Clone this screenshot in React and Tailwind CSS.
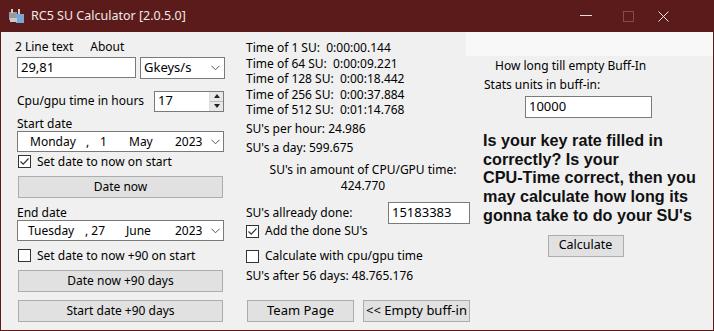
const font = "font-['Noto_Sans','Liberation_Sans',sans-serif]";

function CheckBox({ checked, label }) {
  return (
    <div className="flex items-center h-[15px]">
      <div className="w-[13px] h-[13px] border border-[#333] bg-white flex items-center justify-center">
        {checked && (
          <svg width="11" height="11" viewBox="0 0 11 11">
            <path d="M1.5 5.5 L4.2 8.2 L9.5 2.5" fill="none" stroke="#333" strokeWidth="1.2" />
          </svg>
        )}
      </div>
      <span className="ml-[6px]">{label}</span>
    </div>
  );
}

function Chevron() {
  return (
    <svg width="9" height="6" viewBox="0 0 9 6">
      <path d="M0.5 0.8 L4.5 4.8 L8.5 0.8" fill="none" stroke="#555" strokeWidth="1" />
    </svg>
  );
}

function Btn({ children, className = "" }) {
  return (
    <div
      className={
        "h-[22px] bg-[#e1e1e1] border border-[#adadad] flex items-center justify-center " +
        className
      }
    >
      {children}
    </div>
  );
}

function DatePicker({ parts }) {
  return (
    <div className="h-[21px] bg-white border border-[#7a7a7a] flex items-center relative">
      {parts.map((p) => (
        <span key={p.t} className="absolute" style={{ left: p.x }}>
          {p.t}
        </span>
      ))}
      <span className="absolute right-[3px] top-[7px]">
        <Chevron />
      </span>
    </div>
  );
}

export default function App() {
  return (
    <div className={"w-[714px] h-[331px] bg-[#5b1b1b] flex flex-col text-[12px] text-black " + font}>
      {/* title bar */}
      <div className="h-[32px] flex items-center text-white shrink-0">
        <svg className="ml-[8px]" width="17" height="16" viewBox="0 0 17 16">
          <rect x="1" y="4" width="8" height="8" fill="#9a9a9a" />
          <rect x="8" y="6" width="8" height="9" fill="#7aa6d8" />
          <rect x="3" y="1" width="2" height="4" fill="#d0d0d0" />
          <rect x="10" y="1" width="2" height="5" fill="#d0d0d0" />
          <rect x="2" y="10" width="7" height="4" fill="#c8c8c8" />
        </svg>
        <span className="ml-[6px] text-[12.5px] text-[#f2e8e8]">RC5 SU Calculator [2.0.5.0]</span>
        <div className="flex-1" />
        <svg width="12" height="2" viewBox="0 0 12 2" className="mr-[31px]">
          <rect width="12" height="1" fill="#e8dcdc" />
        </svg>
        <svg width="11" height="11" viewBox="0 0 11 11" className="mr-[12px]">
          <rect x="0.5" y="0.5" width="10" height="10" fill="none" stroke="#8a4a4a" />
        </svg>
        <svg width="11" height="11" viewBox="0 0 11 11" className="mr-[45px] ml-[12px]">
          <path d="M0.5 0.5 L10.5 10.5 M10.5 0.5 L0.5 10.5" stroke="#f2e8e8" strokeWidth="1" />
        </svg>
      </div>

      {/* body */}
      <div className="flex-1 mx-[1px] mb-[1px] bg-[#f0f0f0] flex">
        {/* left column */}
        <div className="w-[245px] pl-[16px] flex flex-col">
          <div className="h-[24px] flex items-center -ml-[2px] pt-[5px]">
            <span>2 Line text</span>
            <span className="ml-[17px]">About</span>
          </div>
          <div className="flex mt-[1px]">
            <div className="w-[119px] h-[21px] bg-white border border-[#7a7a7a] flex items-center pl-[3px] text-[13px]">
              29,81
            </div>
            <div className="w-[85px] h-[22px] ml-[4px] bg-white border border-[#7a7a7a] flex items-center pl-[3px] text-[13px] justify-between pr-[4px]">
              Gkeys/s
              <Chevron />
            </div>
          </div>
          <div className="flex items-center mt-[11px] h-[22px]">
            <span className="w-[137px]">Cpu/gpu time in hours</span>
            <div className="w-[70px] h-[21px] bg-white border border-[#7a7a7a] flex items-center pl-[3px] text-[13px]">
              <span className="flex-1">17</span>
              <div className="w-[14px] h-[19px] flex flex-col border-l border-[#ddd]">
                <div className="flex-1 bg-[#e8e8e8] flex items-center justify-center border-b border-[#bbb]">
                  <svg width="6" height="4" viewBox="0 0 6 4">
                    <path d="M0 4 L3 0 L6 4 Z" fill="#222" />
                  </svg>
                </div>
                <div className="flex-1 bg-[#e8e8e8] flex items-center justify-center">
                  <svg width="6" height="4" viewBox="0 0 6 4">
                    <path d="M0 0 L3 4 L6 0 Z" fill="#222" />
                  </svg>
                </div>
              </div>
            </div>
          </div>
          <div className="mt-[4px] h-[15px] leading-[15px]">Start date</div>
          <div className="w-[207px]">
            <DatePicker
              parts={[
                { t: "Monday", x: 12 },
                { t: ",", x: 68 },
                { t: "1", x: 82 },
                { t: "May", x: 111 },
                { t: "2023", x: 157 },
              ]}
            />
          </div>
          <div className="mt-[2px] ml-[1px]">
            <CheckBox checked label="Set date to now on start" />
          </div>
          <Btn className="mt-[7px] ml-[1px] w-[205px]">Date now</Btn>
          <div className="mt-[7px] h-[15px] leading-[15px]">End date</div>
          <div className="w-[207px]">
            <DatePicker
              parts={[
                { t: "Tuesday", x: 10 },
                { t: ", 27", x: 67 },
                { t: "June", x: 108 },
                { t: "2023", x: 157 },
              ]}
            />
          </div>
          <div className="mt-[7px] ml-[1px]">
            <CheckBox label="Set date to now +90 on start" />
          </div>
          <Btn className="mt-[7px] ml-[1px] w-[205px]">Date now +90 days</Btn>
          <Btn className="mt-[8px] ml-[1px] w-[205px]">Start date +90 days</Btn>
        </div>

        {/* middle column */}
        <div className="w-[224px] flex flex-col">
          <div className="mt-[8px] leading-[15.5px]">
            <div>Time of 1 SU:&nbsp; 0:00:00.144</div>
            <div>Time of 64 SU:&nbsp; 0:00:09.221</div>
            <div>Time of 128 SU:&nbsp; 0:00:18.442</div>
            <div>Time of 256 SU:&nbsp; 0:00:37.884</div>
            <div>Time of 512 SU:&nbsp; 0:01:14.768</div>
          </div>
          <div className="mt-[1px] leading-[19px]">
            <div>SU's per hour: 24.986</div>
            <div>SU's a day: 599.675</div>
          </div>
          <div className="mt-[5px] leading-[16px] text-center pl-[10px]">
            <div>SU's in amount of CPU/GPU time:</div>
            <div>424.770</div>
          </div>
          <div className="mt-[8px] flex items-center h-[22px]">
            <span className="w-[142px]">SU's allready done:</span>
            <div className="w-[82px] h-[22px] bg-white border border-[#7a7a7a] flex items-center pl-[3px] text-[13px]">
              15183383
            </div>
          </div>
          <div>
            <CheckBox checked label="Add the done SU's" />
          </div>
          <div className="mt-[10px]">
            <CheckBox label="Calculate with cpu/gpu time" />
          </div>
          <div className="mt-[4px] leading-[16px]">SU's after 56 days: 48.765.176</div>
          <div className="mt-[16px] flex">
            <Btn className="w-[107px] ml-[1px] text-[13px]">Team Page</Btn>
            <Btn className="w-[107px] ml-[9px] border-[#0078d7] text-[13px]">&lt;&lt; Empty buff-in</Btn>
          </div>
        </div>

        {/* right column */}
        <div className="flex-1 flex flex-col -ml-[4px]">
          <div className="h-[24px] bg-[#f8f8f8] shrink-0" />
          <div className="mt-[2px] ml-[29px] leading-[16px]">How long till empty Buff-In</div>
          <div className="mt-[3px] ml-[18px] leading-[16px]">Stats units in buff-in:</div>
          <div className="mt-[3px] ml-[59px] w-[127px] h-[22px] bg-white border border-[#7a7a7a] flex items-center pl-[3px] text-[13px]">
            10000
          </div>
          <div className="mt-[13px] ml-[17px] font-['Liberation_Sans',Arial,sans-serif] font-bold text-[16.2px] leading-[18.7px] text-[#111] whitespace-nowrap">
            Is your key rate filled in
            <br />
            correctly? Is your
            <br />
            CPU-Time correct, then you
            <br />
            may calculate how long its
            <br />
            gonna take to do your SU's
          </div>
          <div className="mt-[10px] flex justify-center pr-[8px]">
            <Btn className="w-[76px] text-[12.5px]">Calculate</Btn>
          </div>
        </div>
      </div>
    </div>
  );
}
